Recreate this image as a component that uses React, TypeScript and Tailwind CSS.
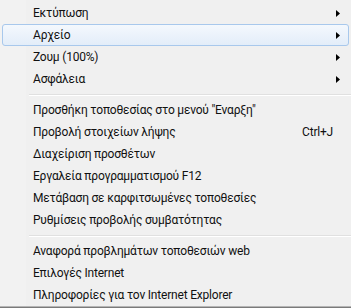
import React from "react";

type Item = { label: string; arrow?: boolean; shortcut?: string; hot?: boolean };

const groups: Item[][] = [
  [
    { label: "Εκτύπωση", arrow: true },
    { label: "Αρχείο", arrow: true, hot: true },
    { label: "Ζουμ (100%)", arrow: true },
    { label: "Ασφάλεια", arrow: true },
  ],
  [
    { label: "Προσθήκη τοποθεσίας στο μενού \"Εναρξη\"" },
    { label: "Προβολή στοιχείων λήψης", shortcut: "Ctrl+J" },
    { label: "Διαχείριση προσθέτων" },
    { label: "Εργαλεία προγραμματισμού F12" },
    { label: "Μετάβαση σε καρφιτσωμένες τοποθεσίες" },
    { label: "Ρυθμίσεις προβολής συμβατότητας" },
  ],
  [
    { label: "Αναφορά προβλημάτων τοποθεσιών web" },
    { label: "Επιλογές Internet" },
    { label: "Πληροφορίες για τον Internet Explorer" },
  ],
];

function Arrow() {
  return (
    <svg width="4" height="7" viewBox="0 0 4 7" className="block">
      <path d="M0 0 L4 3.5 L0 7 Z" fill="#000" />
    </svg>
  );
}

function Row({ item }: { item: Item }) {
  return (
    <div
      className={
        "relative flex h-[22px] items-center pl-[30px] pr-[8px] mx-[2px] rounded-[3px] border " +
        (item.hot
          ? "border-[#a8c8ec] bg-gradient-to-b from-[#f4f8fd] to-[#e3edf9]"
          : "border-transparent")
      }
    >
      <span className="flex-1 whitespace-nowrap">{item.label}</span>
      {item.shortcut && <span className="mr-[7px]">{item.shortcut}</span>}
      {item.arrow && <Arrow />}
    </div>
  );
}

function Sep() {
  return (
    <div className="flex h-[9px] flex-col justify-center pl-[29px]">
      <div className="h-px bg-[#e0e0e0]" />
      <div className="h-px bg-white" />
    </div>
  );
}

export default function App() {
  return (
    <div
      className="relative flex h-[308px] w-[351px] flex-col overflow-hidden bg-[#f0f0f0] text-[12px] tracking-[-0.2px] text-[#111]"
      style={{ fontFamily: 'Roboto, "Noto Sans", sans-serif' }}
    >
      <div className="absolute left-0 top-0 bottom-0 w-[26px] bg-[#f2f2f2]" />
      <div className="relative flex flex-1 flex-col pt-[2px]">
        {groups.map((g, gi) => (
          <React.Fragment key={gi}>
            {gi > 0 && <Sep />}
            {g.map((it, i) => (
              <Row key={i} item={it} />
            ))}
          </React.Fragment>
        ))}
      </div>
      <div className="relative h-px bg-[#b5b5b5]" />
      <div className="relative h-[2px] bg-[#7a7a7a]" />
    </div>
  );
}
